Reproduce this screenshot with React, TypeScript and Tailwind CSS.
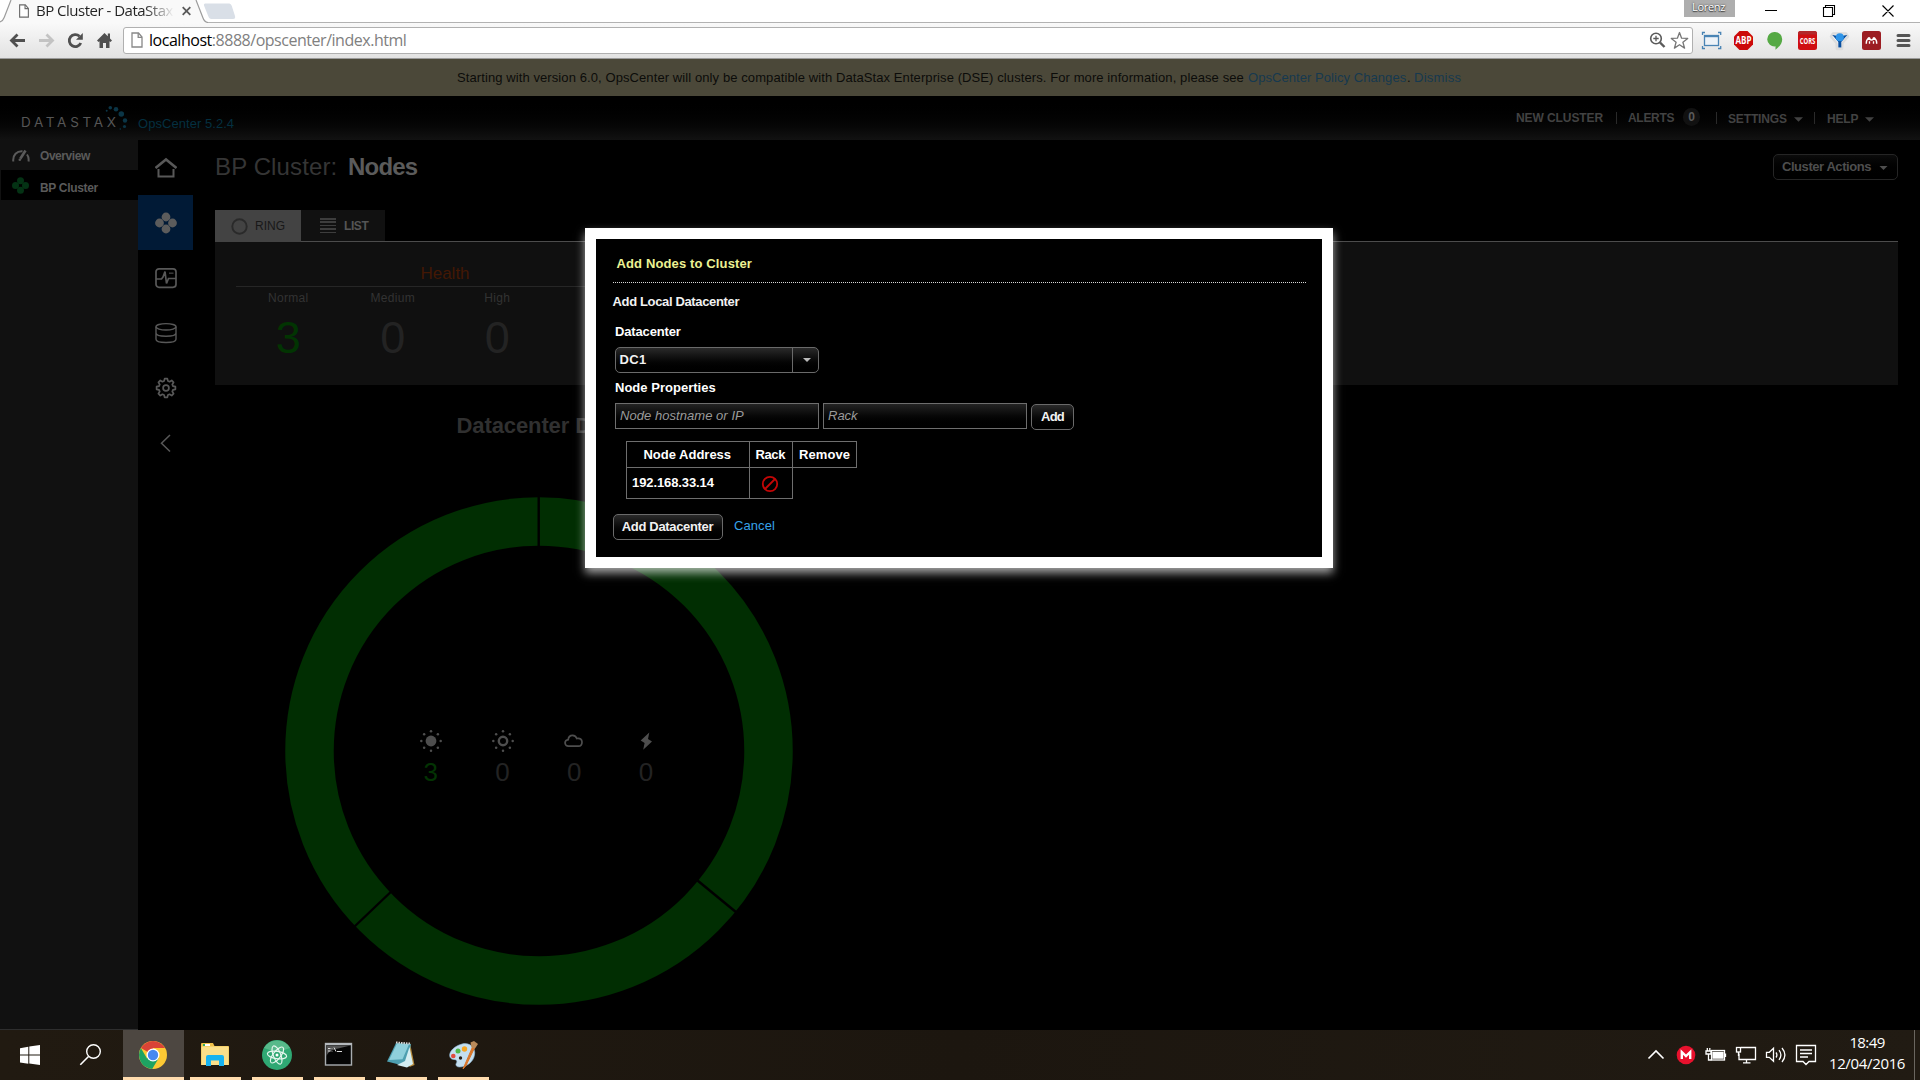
import React from 'react';

const ARIAL = "font-['Liberation_Sans',Arial,sans-serif]";
const SEGOE = "font-['Open_Sans','Noto_Sans',sans-serif]";

/* ---------- Browser chrome ---------- */

function PageIcon({ className }: { className: string }) {
  return (
    <svg className={className} viewBox="0 0 12 16" fill="#fff" stroke="#6b6b6b" strokeWidth="1.3">
      <path d="M1 1h6.5l3.5 4v10H1z" />
      <path d="M7.2 1v4.3H11" fill="none" />
    </svg>
  );
}

function TabStrip() {
  return (
    <div className="relative flex h-[23px] shrink-0 bg-white">
      <svg className="absolute left-0 top-0 h-[23px] w-[1920px]" viewBox="0 0 1920 23" fill="none">
        <path d="M0 22.5H1920" stroke="#b2b2b2" />
        <path d="M0 23V22C3 21 3.500 19.500 4.200 17.500L11 0H196L203 18C204 21 205 22 208 22.500V23Z" fill="#f9f9f9" />
        <path d="M0 22C3 21 3.500 19.500 4.200 17.500L11 0M196 0L203 18C204 21 205 22 208 22.500" stroke="#9c9c9c" strokeWidth="1.2" />
        <path d="M206 3.500H228C230 3.500 231 4 231.800 6L235 16C235.500 18 235 19 233 19H213C210 19 209 18.500 208.200 16L204 5.500C203.500 4 204.500 3.500 206 3.500Z" fill="#d9dfe7" />
      </svg>
      <div className="relative flex h-[22px] w-[196px] items-start pl-[18px]">
        <PageIcon className="mt-[4px] h-[14px] w-[12px]" />
        <span className={`${SEGOE} ml-[6px] w-[138px] overflow-hidden whitespace-nowrap bg-gradient-to-r from-[#222] from-78% to-[#f9f9f9] to-100% bg-clip-text text-[15px] leading-[20px] tracking-[-0.5px] text-transparent`}>
          BP Cluster - DataStax
        </span>
        <svg className="mt-[6px] ml-[8px] h-[10px] w-[9px]" viewBox="0 0 9 10" stroke="#5a5a5a" strokeWidth="1.8">
          <path d="M.7 1.200l7.600 7.600M8.300 1.200L.7 8.800" />
        </svg>
      </div>
      <div className="relative ml-auto flex items-start">
        <div className={`${SEGOE} h-[17px] w-[51px] bg-[#aeaeae] pl-[8px] text-[11px] leading-[14px] tracking-[-0.3px] text-white [text-shadow:0_0_2px_#333,0_1px_1px_#444]`}>
          Lorenz
        </div>
        <svg className="ml-[30px] mr-[26px] h-[22px] w-[129px]" viewBox="1765 0 129 22" fill="none" stroke="#000" strokeWidth="1.1">
          <path d="M1765 10.500h12M1823.500 7.500h9v9h-9zM1825.500 7.500v-2h9v9h-2M1882.500 5.500l11 11M1893.500 5.500l-11 11" />
        </svg>
      </div>
    </div>
  );
}

function NavIcons() {
  return (
    <svg className="h-[35px] w-[123px] shrink-0" viewBox="0 23 123 35" fill="none" strokeWidth="2.800">
      <path d="M25 40.500H12M17.500 34.500L11.500 40.500L17.500 46.500" stroke="#505050" />
      <path d="M39 40.500H52M46.500 34.500L52.500 40.500L46.500 46.500" stroke="#c3c3c3" />
      <path d="M80.800 43A6 6 0 1 1 79.500 36.300" stroke="#505050" />
      <path d="M82.800 33V39.800H76Z" fill="#505050" />
      <path d="M104.500 33L97 40.500L98.500 42L99.500 41.200V48H103V43H106V48H109.500V41.200L110.500 42L112 40.500L110 38.500V33.500H107.800V36.300Z" fill="#505050" />
    </svg>
  );
}

function ExtensionIcons() {
  return (
    <svg className="h-[35px] w-[226px] shrink-0" viewBox="1694 23 226 35" fill="none">
      <g stroke="#4a84b4" strokeWidth="1.300">
        <path d="M1702.500 35v-2.500h2.500M1718 32.500h2.700V35M1702.500 46v2.500h2.500M1718 48.500h2.700V46" />
        <rect x="1704.500" y="35.500" width="14" height="10" fill="#eef3f8" />
        <path d="M1704 36.200h15" strokeWidth="2" />
      </g>
      <path d="M1739.500 31h8l5.500 5.500v8l-5.500 5.500h-8l-5.500-5.500v-8z" fill="#cc0a0a" />
      <text x="1743.500" y="44.200" textAnchor="middle" fill="#fff" fontFamily="Open Sans" fontWeight="700" fontSize="10" textLength="16" lengthAdjust="spacingAndGlyphs">ABP</text>
      <path d="M1775 32a7.200 7.200 0 0 1 7.200 7.200c0 4-2.500 7.300-6.700 10.600v-3.500a7.200 7.200 0 1 1-.5-14.300z" fill="#55a944" />
      <rect x="1798" y="31" width="19" height="19" rx="2.500" fill="#cf0e12" />
      <path d="M1798 33.500a2.500 2.500 0 0 1 2.500-2.500h14a2.500 2.500 0 0 1 2.500 2.500v1h-19z" fill="#b3282b" />
      <text x="1807.500" y="44" textAnchor="middle" fill="#fff" fontFamily="Open Sans" fontWeight="700" fontSize="9.500" textLength="15.500" lengthAdjust="spacingAndGlyphs">CORS</text>
      <path d="M1833 33.500h13l2 3-5.500 6.500-.5 6h-5l-.5-6-5.500-6.500z" fill="#fff" stroke="#dcdcdc" strokeWidth="2.500" strokeLinejoin="round" />
      <path d="M1832.300 35l6 7v5.500h3v-5.500l6-7-3.500 0.500-4 1.500-4-1.500z" fill="#0a4f9e" />
      <circle cx="1839.800" cy="37.300" r="4" fill="#2f95e8" />
      <rect x="1862" y="31" width="19" height="19" rx="2.500" fill="#9c1d22" />
      <path d="M1866.300 43.800c0-2.800 1-4.800 2.300-4.800 1 0 1.200 1 2.900 1s1.900-1 2.900-1c1.300 0 2.300 2 2.300 4.800" stroke="#fff" strokeWidth="1.500" />
      <path d="M1869.500 43.800v-2.500M1873.500 43.800v-2.500" stroke="#fff" strokeWidth="1.300" />
      <circle cx="1869" cy="38.600" r="1.500" fill="#fff" /><circle cx="1874" cy="38.600" r="1.500" fill="#fff" />
      <path d="M1898 35.500h11M1898 40.500h11M1898 45.500h11" stroke="#555" strokeWidth="3" strokeLinecap="round" />
    </svg>
  );
}

function Toolbar() {
  return (
    <div className="flex h-[36px] shrink-0 border-b border-[#9a9a9a] bg-gradient-to-b from-[#f9f9f9] to-[#e2e2e2]">
      <NavIcons />
      <div className="mt-[4px] flex h-[27px] w-[1570px] items-start rounded-[3px] border border-[#b0b0b0] bg-white pl-[7px]">
        <PageIcon className="mt-[4px] h-[16px] w-[12px] opacity-80" />
        <span className={`${SEGOE} ml-[6px] mt-[1px] text-[16px] leading-[22px] tracking-[-0.47px] text-[#808080]`}>
          <span className="text-black">localhost</span>:8888/opscenter/index.html
        </span>
        <svg className="ml-auto mr-[3px] h-[25px] w-[40px]" viewBox="1649 28 40 25" fill="none">
          <circle cx="1656" cy="38.500" r="5.300" stroke="#5a5a5a" strokeWidth="1.600" />
          <path d="M1653.300 38.500h5.400M1656 35.800v5.400" stroke="#5a5a5a" strokeWidth="1.300" />
          <path d="M1660 42.500l4.500 4.500" stroke="#5a5a5a" strokeWidth="2.400" />
          <path d="M1679.500 32.500l2.100 5.700 6.100.2-4.800 3.800 1.700 5.900-5.100-3.400-5.100 3.400 1.700-5.900-4.800-3.800 6.100-.2z" stroke="#777" strokeWidth="1.300" strokeLinejoin="round" />
        </svg>
      </div>
      <div className="ml-px">
        <ExtensionIcons />
      </div>
    </div>
  );
}

/* ---------- OpsCenter header ---------- */

function Caret({ className }: { className: string }) {
  return (
    <svg className={className} viewBox="0 0 10 5" fill="currentColor">
      <path d="M0 0h10L5 5z" />
    </svg>
  );
}

function Banner() {
  return (
    <div className="flex h-[37px] shrink-0 bg-[#4b4839] pl-[457px] pt-[11px] text-[13px] leading-[15px] text-[#0c0c0a]">
      <span className="w-[791px] whitespace-nowrap tracking-[0.092px]">
        Starting with version 6.0, OpsCenter will only be compatible with DataStax Enterprise (DSE) clusters. For more information, please see
      </span>
      <span className="w-[158px] whitespace-nowrap tracking-[0.06px] text-[#16394f]">OpsCenter Policy Changes</span>
      <span className="w-[8px] pl-px">.</span>
      <span className="tracking-[0.25px] text-[#16394f]">Dismiss</span>
    </div>
  );
}

function Separator({ className }: { className: string }) {
  return <span className={`h-[12px] w-px bg-[#2a2a2a] ${className}`} />;
}

function Header() {
  return (
    <div className="flex h-[44px] shrink-0 items-start bg-gradient-to-b from-black to-[#121212]">
      <div className="relative w-[138px] pl-[21px] pt-[18px]">
        <span className="block whitespace-nowrap font-['Inter',sans-serif] text-[13.5px] leading-[16px] tracking-[3.7px] text-[#565656]">DATASTAX</span>
        <svg className="absolute left-[104px] top-[8px] h-[28px] w-[26px]" viewBox="104 104 26 28" fill="#0b3546">
          <circle cx="106.700" cy="110.700" r="1" />
          <circle cx="110.300" cy="107.700" r="1.800" />
          <circle cx="116" cy="109.300" r="2.300" />
          <circle cx="121.300" cy="114" r="2.800" />
          <circle cx="125" cy="120.500" r="2.200" />
          <circle cx="124.500" cy="126.500" r="1.600" />
          <circle cx="120.300" cy="129" r=".8" />
        </svg>
      </div>
      <span className="pt-[20px] text-[13px] leading-[15px] tracking-[0.05px] text-[#043040]">OpsCenter 5.2.4</span>
      <div className="ml-auto flex w-[404px] items-start text-[12px] font-bold leading-[14px] text-[#424242]">
        <span className="mt-[15px] w-[100px] whitespace-nowrap tracking-[-0.08px]">NEW CLUSTER</span>
        <Separator className="mt-[16px]" />
        <span className="ml-[11px] mt-[15px] w-[55px] tracking-[-0.3px]">ALERTS</span>
        <span className="mt-[12px] flex h-[18px] w-[17px] items-center justify-center rounded-full bg-[#111] text-[#5a5a5a]">0</span>
        <Separator className="ml-[16px] mt-[16px]" />
        <span className="ml-[11px] mt-[16px] w-[66px] tracking-[-0.14px]">SETTINGS</span>
        <Caret className="mt-[21px] h-[5px] w-[9px]" />
        <Separator className="ml-[11px] mt-[16px]" />
        <span className="ml-[12px] mt-[16px] w-[38px] tracking-[-0.17px]">HELP</span>
        <Caret className="mt-[21px] h-[5px] w-[9px]" />
      </div>
    </div>
  );
}

/* ---------- Navigation ---------- */

function Sidebar() {
  return (
    <div className="flex w-[138px] shrink-0 flex-col border-b border-[#2e2e2e] bg-[#111] text-[12px] font-bold leading-[14px] text-[#5a5a5a]">
      <div className="flex h-[30px] items-start pl-[12px]">
        <svg className="mt-[9px] h-[13px] w-[18px]" viewBox="0 0 18 13" fill="none" stroke="#5a5a5a" strokeWidth="2">
          <path d="M1.300 12.500C.5 6 5 1.800 10.500 2.200M15 5.500c1.500 2 1.900 4.500 1.500 7" />
          <path d="M13.500 1.500L8.300 9.700" strokeWidth="2.600" />
          <circle cx="7.800" cy="10.800" r="1.300" fill="#5a5a5a" stroke="none" />
        </svg>
        <span className="ml-[10px] mt-[9px] tracking-[-0.45px]">Overview</span>
      </div>
      <div className="ml-px flex h-[30px] items-start bg-black pl-[11px]">
        <svg className="mt-[7px] h-[17px] w-[17px]" viewBox="0 0 17 17" fill="#043214">
          <circle cx="8.500" cy="3.700" r="3.500" /><circle cx="8.500" cy="13.300" r="3.500" />
          <circle cx="3.500" cy="8.500" r="3.500" /><circle cx="13.500" cy="8.500" r="3.500" />
        </svg>
        <span className="ml-[11px] mt-[11px] tracking-[-0.33px]">BP Cluster</span>
      </div>
    </div>
  );
}

function gearPath() {
  const pts: string[] = [];
  const teeth = 8;
  for (let i = 0; i < teeth; i++) {
    const a = (i * 2 * Math.PI) / teeth - Math.PI / 2;
    const at = (r: number, d: number) => `${(11 + r * Math.cos(a + d)).toFixed(2)} ${(11 + r * Math.sin(a + d)).toFixed(2)}`;
    pts.push(at(7.200, -0.27), at(9.500, -0.14), at(9.500, 0.14), at(7.200, 0.27));
  }
  return `M${pts.join('L')}Z`;
}

function IconRail() {
  const icon = 'h-[22px] w-[22px]';
  return (
    <div className="flex w-[55px] shrink-0 flex-col bg-black pl-px text-[#585858]">
      <div className="flex h-[55px] items-center justify-center">
        <svg className={icon} viewBox="0 0 22 22" fill="none" stroke="currentColor" strokeWidth="2">
          <path d="M.5 11L11 2.500L21.500 11" strokeWidth="2.600" />
          <path d="M3.500 12v7.500h15V12" />
        </svg>
      </div>
      <div className="-ml-px flex h-[55px] items-center justify-center bg-[#011a36] pl-px">
        <svg className={icon} viewBox="0 0 22 22" fill="#5c5c5c">
          <circle cx="11" cy="5" r="4.400" /><circle cx="11" cy="17" r="4.400" />
          <circle cx="4.500" cy="11" r="4.400" /><circle cx="17.500" cy="11" r="4.400" />
        </svg>
      </div>
      <div className="flex h-[55px] items-center justify-center">
        <svg className={icon} viewBox="0 0 22 22" fill="none" stroke="currentColor" strokeWidth="1.700">
          <rect x="1" y="1.800" width="20" height="18.500" rx="3" />
          <path d="M1 12h5.500l1.500-2 2-5.500 1.500 12 2-5h7.500" strokeWidth="1.700" />
          <path d="M14 6.200h4.500" strokeWidth="1.400" opacity=".7" />
        </svg>
      </div>
      <div className="flex h-[55px] items-center justify-center">
        <svg className={icon} viewBox="0 0 22 22" fill="none" stroke="currentColor" strokeWidth="1.400">
          <ellipse cx="11" cy="4.800" rx="10" ry="3.200" />
          <path d="M1 4.800v12.500c0 1.800 4 3.200 10 3.200s10-1.400 10-3.200V4.800M1 11c0 1.800 4 3.200 10 3.200S21 12.800 21 11" />
        </svg>
      </div>
      <div className="flex h-[55px] items-center justify-center">
        <svg className={icon} viewBox="0 0 22 22" fill="none" stroke="currentColor" strokeWidth="1.700" strokeLinejoin="round">
          <path d={gearPath()} />
          <circle cx="11" cy="11" r="2.900" />
        </svg>
      </div>
      <div className="flex h-[55px] items-center justify-center">
        <svg className={icon} viewBox="0 0 22 22" fill="none" stroke="currentColor" strokeWidth="1.500">
          <path d="M15 3L6.500 11.200L15 19.500" />
        </svg>
      </div>
    </div>
  );
}

/* ---------- Main panel ---------- */

function SunDots() {
  return (
    <>
      {[0, 45, 90, 135, 180, 225, 270, 315].map((a) => (
        <circle key={a} cx={11 + 9.700 * Math.cos((a * Math.PI) / 180)} cy={11 + 9.700 * Math.sin((a * Math.PI) / 180)} r="1.250" />
      ))}
    </>
  );
}

const weather = [
  { value: '3', color: 'text-[#033303]', icon: <><circle cx="11" cy="11" r="5.400" /><SunDots /></> },
  { value: '0', color: 'text-[#232323]', icon: <><circle cx="11" cy="11" r="4.200" fill="none" stroke="currentColor" strokeWidth="2.400" /><SunDots /></> },
  { value: '0', color: 'text-[#232323]', icon: <path d="M5.500 16.200a3.300 3.300 0 0 1-.3-6.600c.3-2.800 2.200-4.300 4.300-4.300 2 0 3.600 1 4.300 3.200 3.200-.8 5.200 1 5.200 3.500 0 2.400-1.500 4.200-3.500 4.200z" fill="none" stroke="currentColor" strokeWidth="1.700" /> },
  { value: '0', color: 'text-[#232323]', icon: <path d="M14.300 2.500L5.700 10.500l3.900 2.400-1.400 6.800 8.800-8.200-4-2.600z" /> },
];

function Ring() {
  return (
    <div className="relative ml-[70px] mt-[59px] h-[508px] w-[508px]">
      <svg className="h-[508px] w-[508px]" viewBox="0 0 508 508" fill="none">
        <circle cx="254" cy="254" r="229.500" stroke="#012e02" strokeWidth="48.500" />
        <g stroke="#000" strokeWidth="2.400">
          <path d="M253.700 0V51M411 382.300L453 416.700M106.800 394L68.500 430.500" />
        </g>
      </svg>
      <div className="absolute left-[110px] top-[233px] flex">
        {weather.map((w, i) => (
          <div key={i} className="flex w-[71.700px] flex-col items-center">
            <svg className="h-[22px] w-[22px] text-[#4e4e4e]" viewBox="0 0 22 22" fill="currentColor">{w.icon}</svg>
            <span className={`mt-[5px] text-[26px] leading-[30px] ${w.color}`}>{w.value}</span>
          </div>
        ))}
      </div>
    </div>
  );
}

const health = [
  { label: 'Normal', value: '3', color: 'text-[#023402]' },
  { label: 'Medium', value: '0', color: 'text-[#232323]' },
  { label: 'High', value: '0', color: 'text-[#232323]' },
];

function Main() {
  return (
    <div className="flex grow flex-col pl-[22px] pr-[22px]">
      <div className="flex h-[70px] shrink-0 items-start">
        <h1 className="flex pt-[13px] text-[24px] leading-[27px]">
          <span className="w-[133px] whitespace-nowrap tracking-[0.13px] text-[#353535]">BP Cluster:</span>
          <span className="font-bold tracking-[-0.8px] text-[#5b5b5b]">Nodes</span>
        </h1>
        <button className="ml-auto mt-[14px] flex h-[26px] w-[125px] items-start rounded-[5px] border border-[#252525] bg-gradient-to-b from-[#0c0c0c] to-black pl-[8px] pt-[4px] text-[13px] font-bold leading-[15px] text-[#4e4e4e]">
          <span className="w-[97px] whitespace-nowrap text-left tracking-[-0.44px]">Cluster Actions</span>
          <Caret className="mt-[7px] h-[4px] w-[9px]" />
        </button>
      </div>
      <div className="flex h-[32px] shrink-0 items-start text-[12px] leading-[14px]">
        <div className="flex h-[32px] w-[86px] items-start bg-[#434343] pl-[16px] pt-[8px] text-[#181818]">
          <svg className="h-[17px] w-[17px]" viewBox="0 0 17 17" fill="none" stroke="#2a2a2a" strokeWidth="1.900"><circle cx="8.500" cy="8.500" r="7.200" /></svg>
          <span className="ml-[7px] mt-px">RING</span>
        </div>
        <div className="flex h-[32px] grow border-b border-[#4c4c4c]">
          <div className="flex h-[31px] w-[84px] items-start bg-[#111] pl-[19px] pt-[8px] font-bold text-[#555]">
            <div className="flex h-[15px] w-[16px] flex-col justify-between">
              {[0, 1, 2, 3, 4].map((i) => <span key={i} className="h-[1.500px] bg-[#3d3d3d]" />)}
            </div>
            <span className="ml-[8px] mt-px tracking-[-0.4px]">LIST</span>
          </div>
        </div>
      </div>
      <div className="flex h-[143px] shrink-0 bg-[#101010] pl-[21px] pt-[22px]">
        <div className="w-[418px]">
          <div className="h-[23px] border-b border-[#262626] text-center text-[17px] leading-[19px] text-[#431804]">Health</div>
          <div className="grid grid-cols-4">
            {health.map((h) => (
              <div key={h.label} className="flex flex-col items-center pt-[4px]">
                <span className="text-[12px] leading-[14px] tracking-[0.3px] text-[#333]">{h.label}</span>
                <span className={`mt-[7px] text-[45px] leading-[51px] ${h.color}`}>{h.value}</span>
              </div>
            ))}
          </div>
        </div>
      </div>
      <h2 className="mt-[28px] pl-[241.500px] text-[22px] font-bold leading-[25px] tracking-[-0.1px] text-[#303030]">Datacenter DC1</h2>
      <Ring />
    </div>
  );
}

/* ---------- Dialog ---------- */

const BUTTON = 'h-[26px] rounded-[5px] border border-[#6a6a6a] bg-gradient-to-b from-[#2a2a2a] to-black pt-[4px] text-center';
const FIELD = 'h-[26px] w-[204px] border border-[#6e6e6e] bg-gradient-to-b from-[#242424] to-black pl-[4px] pt-[4px] font-normal italic text-[#9a9a9a]';

function AddNodesDialog() {
  return (
    <div className="absolute left-[585px] top-[228px] flex h-[340px] w-[748px] flex-col border-[11px] border-white bg-black pl-[17px] pr-[16px] pt-[17px] text-[13px] font-bold leading-[15px] text-[#f2f2f2] shadow-[0_5px_9px_rgba(255,255,255,0.65)]">
      <div className="border-b border-dotted border-[#d8d8d8] pb-[11px] pl-[3.500px] tracking-[0.13px] text-[#ecf293]">Add Nodes to Cluster</div>
      <div className="mt-[11px] -translate-x-[0.500px] tracking-[-0.35px]">Add Local Datacenter</div>
      <div className="mt-[15px] pl-[2px] tracking-[-0.15px] text-white">Datacenter</div>
      <div className="ml-[2px] mt-[8px] flex h-[26px] w-[204px] rounded-[5px] border border-[#6a6a6a] bg-gradient-to-b from-[#2a2a2a] to-black">
        <span className="w-[177px] border-r border-[#6a6a6a] pl-[3.500px] pt-[4px] tracking-[0.4px]">DC1</span>
        <Caret className="ml-[10px] mt-[10px] h-[4px] w-[8px] text-[#bbb]" />
      </div>
      <div className="mt-[7px] pl-[2px] tracking-[0.02px] text-white">Node Properties</div>
      <div className="ml-[2px] mt-[8px] flex gap-[4px]">
        <div className={`${FIELD} tracking-[0.05px]`}>Node hostname or IP</div>
        <div className={FIELD}>Rack</div>
        <div className={`${BUTTON} mt-px w-[43px] tracking-[-0.8px]`}>Add</div>
      </div>
      <div className="ml-[13px] mt-[11px] flex h-[27px] w-[231px] border border-[#6e6e6e] pt-[5px] text-white">
        <span className="-mt-[5px] w-[123px] border-r border-[#6e6e6e] pr-[1.500px] pt-[5px] text-center">Node Address</span>
        <span className="-mt-[5px] w-[43px] border-r border-[#6e6e6e] pr-[1.500px] pt-[5px] text-center tracking-[-0.4px]">Rack</span>
        <span className="grow text-center tracking-[0.1px]">Remove</span>
      </div>
      <div className="ml-[13px] flex h-[31px] w-[167px] border border-t-0 border-[#6e6e6e]">
        <span className="w-[123px] border-r border-[#6e6e6e] pl-[5px] pt-[7px] tracking-[-0.1px] text-white">192.168.33.14</span>
        <svg className="ml-[11px] mt-[7px] h-[18px] w-[18px]" viewBox="0 0 18 18" fill="none" stroke="#c40606" strokeWidth="1.800">
          <circle cx="9" cy="9" r="7.200" />
          <path d="M4 14L14 4" />
        </svg>
      </div>
      <div className="mt-[15px] flex">
        <div className={`${BUTTON} w-[110px] pr-px tracking-[-0.33px]`}>Add Datacenter</div>
        <span className="ml-[11px] mt-[4px] font-normal tracking-[0.08px] text-[#36a3e8]">Cancel</span>
      </div>
    </div>
  );
}

/* ---------- Taskbar ---------- */

const apps = [
  <g key="chrome">
    <circle cx="15" cy="15" r="14" fill="#fcc934" />
    <path d="M15 15L2.900 8A14 14 0 0 1 27.100 8H15z" fill="#d94436" />
    <path d="M2.900 8A14 14 0 0 0 14.200 29L20.500 18.500 15 15 9 18.500z" fill="#1ea362" />
    <circle cx="15" cy="15" r="6.500" fill="#fff" /><circle cx="15" cy="15" r="5.200" fill="#4688f1" />
  </g>,
  <g key="explorer">
    <path d="M1 4a1 1 0 0 1 1-1h11l1.500 3H28a1 1 0 0 1 1 1v18H1z" fill="#f0c14a" />
    <path d="M1.500 6.500H28.500V25H1.500z" fill="#fbe08a" />
    <path d="M3 4h7v2H3z" fill="#fff" /><path d="M3 4h2v2H3z" fill="#2fae5c" />
    <path d="M6 26V17a2 2 0 0 1 2-2h14a2 2 0 0 1 2 2v9h-5v-5.500h-8V26z" fill="#17b3f0" />
  </g>,
  <g key="atom">
    <circle cx="15" cy="15" r="15" fill="#2fa873" /><path d="M2 8A15 15 0 0 1 28 8Q15 14 2 8z" fill="#57b98a" />
    <g fill="none" stroke="#e6f6ee" strokeWidth="1.200">
      <ellipse cx="15" cy="15" rx="3.700" ry="9.700" transform="rotate(-22 15 15)" />
      <ellipse cx="15" cy="15" rx="3.700" ry="9.700" transform="rotate(38 15 15)" />
      <ellipse cx="15" cy="15" rx="3.700" ry="9.700" transform="rotate(98 15 15)" />
    </g>
    <circle cx="15" cy="15" r="1.500" fill="#fff" />
  </g>,
  <g key="terminal">
    <rect x="1.500" y="3.500" width="26" height="21.500" fill="#050505" stroke="#a9adb1" strokeWidth="1.400" />
    <path d="M1 3h27v2.200H1z" fill="#b4b8bc" />
    <path d="M2.500 5.500h24L12 9Q4 11 2.500 16z" fill="#555" />
    <path d="M4 8.500h2.500M4 11h2.500M8 8.500v.5M8 11v.5M10 7.500l2 4M13 11.500h5" stroke="#ddd" />
  </g>,
  <g key="notepad">
    <path d="M24 3l4.500 22-5 2z" fill="#b58a3c" />
    <path d="M10 3l15 1-4 22.500L1 21.500z" fill="#4e9fb0" />
    <path d="M11 3.500l12 .8-6.500 15L3 20z" fill="#8fd0dc" />
    <path d="M23.500 7l3.500 17-6 3.500-10-2.500 8-4z" fill="#d5eef2" />
    <path d="M10 2.500l15 1.200" stroke="#d6d6d6" strokeWidth="2" strokeDasharray="1.500 1" />
  </g>,
  <g key="paint">
    <path d="M14 4C22 2 28 8 26.500 15c-1 7-8 12-15 12-3 0-4.500-2-3-4 1-2 0-3.500-3-3.500C-1 19 0 8 14 4z" fill="#c4dff0" stroke="#8fb8d6" strokeWidth=".6" />
    <circle cx="10" cy="11" r="2.500" fill="#4fb74a" /><circle cx="5.300" cy="16" r="2.300" fill="#e04b3f" />
    <circle cx="16.500" cy="9" r="2.700" fill="#f5a623" /><circle cx="12.500" cy="18" r="1.700" fill="#2a2018" />
    <path d="M24.500 7L15 29l3-3.500L26.500 8z" fill="#d9762a" stroke="#d9762a" />
    <path d="M23.500 7.500L22.500 2.500 26 1l4 3-3 4.500z" fill="#b98a5a" />
  </g>,
];

function Taskbar() {
  return (
    <div className="flex h-[50px] shrink-0 items-start bg-gradient-to-r from-[#211a11] via-[#1c160f] to-[#211b13]">
      <svg className="h-[50px] w-[123px]" viewBox="0 1030 123 50" fill="none">
        <path d="M20 1048.300l8.300-1.500v7.700H20zM29.300 1046.600L40 1045v9.500H29.300zM20 1055.500h8.300v8.200l-8.300-1.200zM29.300 1055.500H40v9.500l-10.700-1.400z" fill="#fff" />
        <circle cx="93.500" cy="1051.500" r="6.800" stroke="#fff" strokeWidth="1.400" />
        <path d="M88.500 1056.500L80.300 1064.700" stroke="#fff" strokeWidth="1.600" />
      </svg>
      <div className="flex gap-[11px]">
        {apps.map((icon, i) => (
          <div key={i} className={i === 0 ? '-mr-[5px] flex h-[50px] w-[61px] justify-center border-b-[3px] border-[#ffdcae] bg-[#4d4741] pr-[2px] pt-[10px]' : 'flex h-[50px] w-[51px] justify-center border-b-[3px] border-[#ffdcae] pr-[2px] pt-[10px]'}>
            <svg className="h-[30px] w-[30px]" viewBox="0 0 30 30">{icon}</svg>
          </div>
        ))}
      </div>
      <svg className="ml-auto h-[50px] w-[176px]" viewBox="1644 1030 176 50" fill="none" stroke="#fff" strokeWidth="1.300">
        <path d="M1648.500 1058.500l7.500-7.500 7.500 7.500" strokeWidth="1.600" />
        <circle cx="1686" cy="1055" r="9.300" fill="#e8112d" stroke="none" />
        <path d="M1681.800 1059v-7l4.200 4 4.200-4v7" strokeWidth="2.400" />
        <rect x="1711.500" y="1050.500" width="13" height="9.500" />
        <path d="M1713 1052.500h10v5.500h-10zM1725.500 1053.500v3.500" fill="#fff" />
        <path d="M1706 1051h5v3h-5zM1707.300 1048v3M1709.800 1048v3M1708.500 1054v6h3" />
        <path d="M1741 1047.500h14.500v12H1739v-6M1746.500 1060v3M1743 1062.800h7.500" />
        <rect x="1736.500" y="1047.500" width="4" height="4.500" /><path d="M1738.500 1052v4" />
        <path d="M1766.500 1052.300h2.800l4.200-4v13l-4.200-4h-2.800zM1776 1052.500q1.800 2.500 0 5M1779 1050.200q3.800 4.800 0 9.600M1782 1048q5.800 7 0 14" />
        <path d="M1796.500 1045.500h19v16h-6.500l-3 3-3-3h-6.500zM1800 1050h12M1800 1053.500h12M1800 1057h8" />
      </svg>
      <div className={`${SEGOE} flex w-[94px] flex-col items-center pt-[2px] text-[15px] leading-[21px] text-white`}>
        <span className="tracking-[-0.6px]">18:49</span>
        <span className="tracking-[-0.34px]">12/04/2016</span>
      </div>
      <div className="h-[50px] w-[6px] border-l border-[#6a665f]" />
    </div>
  );
}

export default function App() {
  return (
    <div className={`${ARIAL} relative flex h-[1080px] w-[1920px] flex-col overflow-hidden bg-black`}>
      <TabStrip />
      <Toolbar />
      <Banner />
      <Header />
      <div className="flex h-[890px] shrink-0">
        <Sidebar />
        <IconRail />
        <Main />
      </div>
      <Taskbar />
      <AddNodesDialog />
    </div>
  );
}
